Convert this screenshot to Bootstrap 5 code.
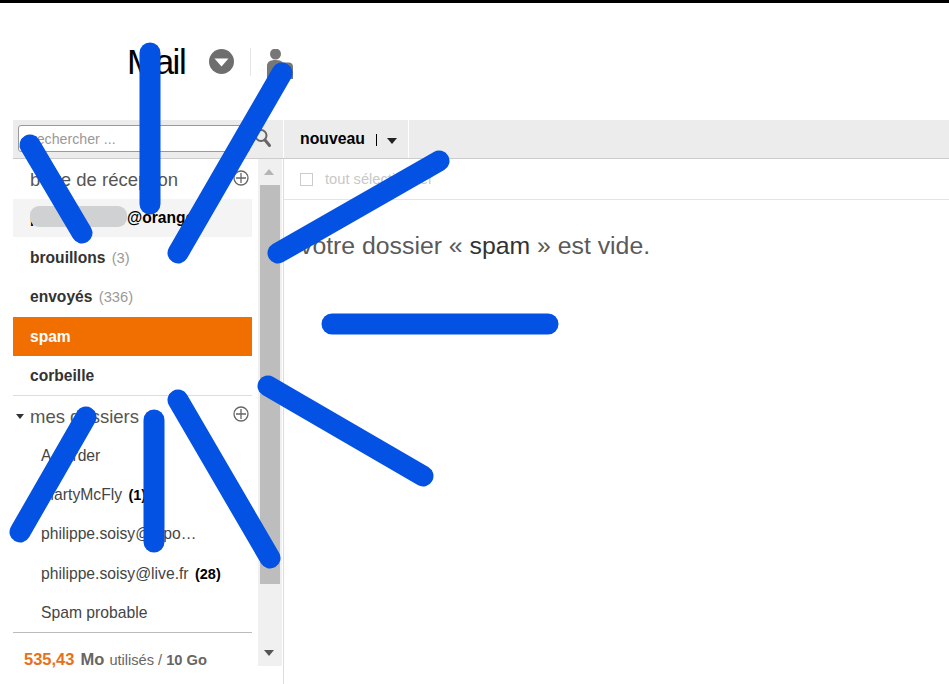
<!DOCTYPE html>
<html lang="fr">
<head>
  <meta charset="UTF-8">
  <meta name="viewport" content="width=device-width, initial-scale=1">
  <title>Mail</title>
  <link href="https://cdn.jsdelivr.net/npm/bootstrap@5.3.0/dist/css/bootstrap.min.css" rel="stylesheet">
  <style>
    html, body { height: 684px; overflow: hidden; }
    body { font-family: "Liberation Sans", Arial, sans-serif; border-top: 3px solid #000; background: #fff; color: #333; position: relative; }
    .mail-head { height: 117px; padding: 27px 0 0 127px; }
    .mail-logo { font-size: 35px; line-height: 63px; letter-spacing: -1.5px; color: #000; width: 82px; height: 63px; }
    .head-sep { width: 1px; height: 28px; background: #e6e6e6; margin: 18px 16px 0 16px; }
    .head-btn { margin-top: 19px; }
    .tool-bar { height: 39px; margin-left: 13px; background: #ececec; border-bottom: 1px solid #ccc; }
    .search-zone { width: 270px; padding: 5px 0 0 5px; }
    .search-input { width: 232px; height: 27px; border: 1px solid #999; border-radius: 3px; background: #fff; padding: 0 13px; font-size: 14.200px; color: #999; line-height: 26px; }
    .new-btn { width: 126px; border-left: 1px solid #fff; border-right: 1px solid #fff; padding-left: 16px; font-size: 15.800px; font-weight: 700; color: #000; line-height: 37px; }
    .new-sep { width: 1px; height: 12px; background: #000; margin: 14px 10px 0 11px; }
    .new-caret { width: 0; height: 0; border: 5.5px solid transparent; border-top: 6px solid #222; border-bottom: 0; margin-top: 18px; }
    .main-zone { height: 525px; }
    .side-col { width: 284px; height: 525px; border-right: 1px solid #ddd; padding-left: 13px; }
    .side-list { width: 239px; height: 507px; }
    .side-title { font-size: 18.500px; color: #555; line-height: 41px; padding-left: 17px; height: 40px; position: relative; white-space: nowrap; }
    .side-row { height: 39.4px; padding: 0 0 0 17px; line-height: 40px; font-size: 15.600px; font-weight: 700; color: #333; border: 0; background: transparent; border-radius: 0 !important; white-space: nowrap; position: relative; }
    .side-row .row-count { font-weight: 400; color: #999; margin-left: 2px; font-size: 14.700px; }
    .side-row.row-first { background: #f4f4f4; color: #000; height: 38px; line-height: 38px; margin-bottom: 1px; overflow: hidden; }
    .side-row.row-spam { background: #f16e00; color: #fff; }
    .mail-local { display: inline-block; width: 97px; font-size: 14.300px; }
    .mail-pill { position: absolute; left: 17px; top: 7px; width: 97px; height: 21px; border-radius: 9px; background: #d0d1d3; }
    .folder-row { height: 39.4px; line-height: 40px; padding-left: 28px; font-size: 15.700px; color: #444; white-space: nowrap; }
    .folder-row b { color: #000; margin-left: 2px; font-size: 14.500px; }
    .folders-head { border-top: 1px solid #ddd; height: 41px; line-height: 41px; margin-top: -1px; }
    .folders-caret { position: absolute; left: 3px; top: 18px; width: 0; height: 0; border: 4.5px solid transparent; border-top: 5px solid #333; border-bottom: 0; }
    .add-icon { position: absolute; right: 3px; top: 11px; }
    .folders-head .add-icon { top: 10px; }
    .quota-row { border-top: 1px solid #bbb; margin-top: -1px; padding: 18px 0 0 11px; font-size: 14.600px; color: #666; line-height: 16px; white-space: nowrap; }
    .quota-row .quota-used { color: #e8701a; font-weight: 700; font-size: 16.500px; }
    .quota-row .quota-mo { font-weight: 700; font-size: 16.500px; margin-left: 2px; margin-right: 1px; }
    .quota-row .quota-total { font-weight: 700; font-size: 14.700px; }
    .scroll-col { width: 24px; height: 507px; margin-left: 6px; background: #f0f0f0; position: relative; padding: 26px 2px 0 2px; }
    .scroll-thumb { height: 399px; background: #bdbdbd; }
    .scroll-up, .scroll-down { position: absolute; left: 6px; width: 0; height: 0; border: 5.5px solid transparent; }
    .scroll-up { top: 10px; border-bottom: 6px solid #b5b5b5; border-top: 0; }
    .scroll-down { bottom: 10px; border-top: 6px solid #555; border-bottom: 0; }
    .select-row { height: 41px; border-bottom: 1px solid #e4e4e4; padding: 14px 0 0 16px; font-size: 14.700px; color: #c8c8c8; line-height: 13px; }
    .select-box { width: 13px; height: 13px; border: 1px solid #ccc; margin-right: 12px; }
    .empty-msg { font-size: 24.800px; color: #5a5a5a; padding: 33px 0 0 16px; line-height: 26px; margin: 0; white-space: nowrap; }
    .empty-msg span { color: #333; }
    .scribble { position: absolute; left: 0; top: -3px; pointer-events: none; }
    .scribble line { stroke: #0352e3; stroke-width: 21; stroke-linecap: round; }
  </style>
</head>
<body>
<header class="mail-head d-flex">
  <div class="mail-logo">Mail</div>
  <svg class="head-btn" width="25" height="25" viewBox="0 0 25 25" aria-hidden="true">
    <circle cx="12.5" cy="12.5" r="12.5" fill="#6e6e6e"/>
    <path d="M5.5 9.5h14l-7 8z" fill="#fff"/>
  </svg>
  <div class="head-sep"></div>
  <svg class="head-btn" width="27" height="32" viewBox="0 0 27 32" aria-hidden="true">
    <circle cx="8.500" cy="5" r="5.500" fill="#777"/>
    <path d="M0 30V17c0-4 3-6 8.500-6 3.500 0 6 .8 7.500 2.500h6c2 0 4 1.500 4 4V30z" fill="#777"/>
  </svg>
</header>

<div class="tool-bar d-flex">
  <div class="search-zone d-flex">
    <div class="search-input">rechercher ...</div>
    <svg class="ms-1" width="20" height="26" viewBox="0 0 20 26" aria-hidden="true">
      <circle cx="7" cy="10.500" r="5.500" fill="none" stroke="#666" stroke-width="2"/>
      <path d="M11 15l4.500 5.500" stroke="#666" stroke-width="3" stroke-linecap="round"/>
    </svg>
  </div>
  <div class="new-btn d-flex">
    <span>nouveau</span>
    <span class="new-sep"></span>
    <span class="new-caret"></span>
  </div>
</div>

<div class="main-zone d-flex">
  <aside class="side-col d-flex">
    <div class="side-list">
      <div class="side-title">
        boîte de réception
        <svg class="add-icon" width="16" height="16" viewBox="0 0 16 16" aria-hidden="true">
          <circle cx="8" cy="8" r="7" fill="none" stroke="#666" stroke-width="1.300"/>
          <path d="M8 3v10M3 8h10" stroke="#666" stroke-width="1.300"/>
        </svg>
      </div>
      <ul class="list-group list-group-flush">
        <li class="list-group-item side-row row-first"><span class="mail-local">philippe.soisy</span>@orange.fr<span class="mail-pill"></span></li>
        <li class="list-group-item side-row">brouillons <span class="row-count">(3)</span></li>
        <li class="list-group-item side-row">envoyés <span class="row-count">(336)</span></li>
        <li class="list-group-item side-row row-spam">spam</li>
        <li class="list-group-item side-row">corbeille</li>
      </ul>
      <div class="side-title folders-head">
        <span class="folders-caret"></span>
        mes dossiers
        <svg class="add-icon" width="16" height="16" viewBox="0 0 16 16" aria-hidden="true">
          <circle cx="8" cy="8" r="7" fill="none" stroke="#666" stroke-width="1.300"/>
          <path d="M8 3v10M3 8h10" stroke="#666" stroke-width="1.300"/>
        </svg>
      </div>
      <div class="folder-row">A garder</div>
      <div class="folder-row">MartyMcFly <b>(1)</b></div>
      <div class="folder-row">philippe.soisy@lapo…</div>
      <div class="folder-row">philippe.soisy@live.fr <b>(28)</b></div>
      <div class="folder-row">Spam probable</div>
      <div class="quota-row"><span class="quota-used">535,43</span> <span class="quota-mo">Mo</span> utilisés / <span class="quota-total">10 Go</span></div>
    </div>
    <div class="scroll-col">
      <span class="scroll-up"></span>
      <div class="scroll-thumb"></div>
      <span class="scroll-down"></span>
    </div>
  </aside>
  <main class="flex-grow-1">
    <div class="select-row d-flex">
      <span class="select-box"></span>
      <span>tout sélectionner</span>
    </div>
    <p class="empty-msg">votre dossier « <span>spam</span> » est vide.</p>
  </main>
</div>

<svg class="scribble" width="949" height="684" aria-hidden="true">
  <line x1="150" y1="53" x2="150" y2="204"/>
  <line x1="282" y1="73" x2="178" y2="253"/>
  <line x1="30" y1="145" x2="82" y2="233"/>
  <line x1="439" y1="161" x2="278" y2="253"/>
  <line x1="332" y1="324" x2="548" y2="324"/>
  <line x1="268" y1="386" x2="423" y2="476"/>
  <line x1="86" y1="417" x2="20" y2="532"/>
  <line x1="154" y1="420" x2="154" y2="542"/>
  <line x1="178" y1="400" x2="270" y2="558"/>
</svg>
<script src="https://cdn.jsdelivr.net/npm/bootstrap@5.3.0/dist/js/bootstrap.bundle.min.js"></script>
</body>
</html>
